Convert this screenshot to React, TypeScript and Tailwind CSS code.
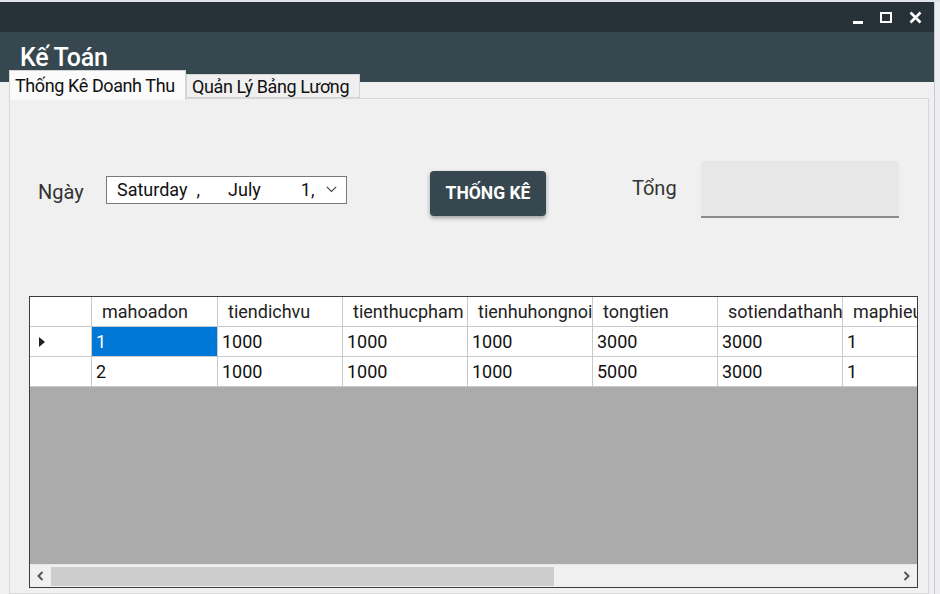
import React from 'react';

const columns = [
  { name: 'mahoadon', w: 'w-[126px]' },
  { name: 'tiendichvu', w: 'w-[125px]' },
  { name: 'tienthucpham', w: 'w-[125px]' },
  { name: 'tienhuhongnoi', w: 'w-[125px]' },
  { name: 'tongtien', w: 'w-[125px]' },
  { name: 'sotiendathanh', w: 'w-[125px]' },
  { name: 'maphieu', w: 'w-[125px]' }
];

const rows = [
  ['1', '1000', '1000', '1000', '3000', '3000', '1'],
  ['2', '1000', '1000', '1000', '5000', '3000', '1']
];

const App: React.FC = () => {
  return (
    <div className="w-[940px] h-[594px] overflow-hidden bg-[#e3e6ee] flex flex-col font-['Roboto','Noto_Sans',sans-serif]">
      <div className="h-[2px] bg-[#dfe3ec] shrink-0" />
      <div className="flex flex-1 min-h-0">
        <div className="w-[934px] flex flex-col bg-[#f0f0f0]">
          {/* title bar */}
          <div className="h-[30px] shrink-0 bg-[#263238] flex items-center justify-end pr-[12px] gap-[17px]">
            <div className="w-[10px] h-[3px] bg-white mt-[10px]" />
            <div className="w-[12px] h-[11px] border-[2.5px] border-white" />
            <svg width="13" height="13" viewBox="0 0 13 13">
              <path d="M1.5 1.5 L11.5 11.5 M11.5 1.5 L1.5 11.5" stroke="white" strokeWidth="2.6" />
            </svg>
          </div>
          {/* header */}
          <div className="h-[50px] shrink-0 bg-[#37474f] pl-[20px] pt-[13px]">
            <span className="text-white text-[25px] font-medium leading-none tracking-[-0.3px]">Kế Toán</span>
          </div>
          {/* tabs */}
          <div className="-mt-[12px] h-[28px] shrink-0 flex items-start pl-[9px] relative z-10">
            <div className="h-[30px] w-[177px] bg-[#fbfbfb] border border-b-0 border-[#d4d4d4] flex items-center pl-[5px] text-[18px] text-[#111] tracking-[-0.4px] whitespace-nowrap">
              Thống Kê Doanh Thu
            </div>
            <div className="mt-[4px] h-[24px] w-[174px] bg-[#f0f0f0] border border-[#d4d4d4] flex items-center pl-[5px] text-[18px] text-[#111] tracking-[-0.4px] whitespace-nowrap">
              Quản Lý Bảng Lương
            </div>
          </div>
          {/* tab page */}
          <div className="flex-1 min-h-0 ml-[9px] mr-[5px] border border-[#d8d8d8] bg-[#f0f0f0] flex flex-col pl-[1px]">
            <div className="flex items-center h-[57px] mt-[62px] shrink-0">
              <div className="ml-[27px] w-[68px] text-[20px] text-[#333] mt-[4px]">Ngày</div>
              <div className="w-[241px] h-[28px] bg-white border border-[#7a7a7a] flex items-center text-[18px] text-[#111] whitespace-nowrap">
                <span className="ml-[10px]">Saturday</span>
                <span className="ml-[9px]">,</span>
                <span className="ml-[28px]">July</span>
                <span className="ml-[40px] w-[18px] overflow-hidden">1, 2023</span>
                <svg className="ml-[7px]" width="11" height="7" viewBox="0 0 11 7">
                  <path d="M0.8 0.8 L5.5 5.5 L10.2 0.8" fill="none" stroke="#444" strokeWidth="1.2" />
                </svg>
              </div>
              <div className="ml-[83px] w-[116px] h-[45px] bg-[#37474f] rounded-[4px] shadow-[0_2px_4px_rgba(0,0,0,0.35)] flex items-center justify-center text-white font-bold text-[17.5px] mt-[8px]">
                THỐNG KÊ
              </div>
              <div className="ml-[86px] w-[69px] text-[20px] text-[#333] -mt-[3px]">Tổng</div>
              <div className="w-[198px] h-[57px] bg-[#e7e7e7] border-b-2 border-[#8a8a8a]" />
            </div>

            {/* grid */}
            <div className="ml-[18px] mt-[78px] w-[889px] h-[292px] border border-[#3c3c3c] bg-[#ababab] flex flex-col overflow-hidden">
              <div className="flex h-[30px] shrink-0 bg-white border-b border-[#c9c9c9]">
                <div className="w-[62px] shrink-0 border-r border-[#c9c9c9]" />
                {columns.map((c, i) => (
                  <div key={i} className={`${c.w} shrink-0 border-r border-[#c9c9c9] flex items-center pl-[10px] text-[18px] text-[#222] whitespace-nowrap overflow-hidden`}>
                    {c.name}
                  </div>
                ))}
              </div>
              {rows.map((r, ri) => (
                <div key={ri} className="flex h-[30px] shrink-0 bg-white border-b border-[#c9c9c9]">
                  <div className="w-[62px] shrink-0 border-r border-[#c9c9c9] flex items-center pl-[9px]">
                    {ri === 0 && (
                      <svg width="6" height="10" viewBox="0 0 6 10">
                        <path d="M0 0 L6 5 L0 10 Z" fill="#222" />
                      </svg>
                    )}
                  </div>
                  {r.map((v, ci) => (
                    <div
                      key={ci}
                      className={`${columns[ci].w} shrink-0 border-r border-[#c9c9c9] flex items-center pl-[4px] text-[18px] ${ri === 0 && ci === 0 ? 'bg-[#0078d7] text-white' : 'text-[#111]'}`}
                    >
                      {v}
                    </div>
                  ))}
                </div>
              ))}
              <div className="flex-1" />
              <div className="h-[23px] shrink-0 bg-[#f0f0f0] border-t border-[#e6e6e6] flex items-center">
                <div className="w-[21px] h-full flex items-center justify-center">
                  <svg width="7" height="10" viewBox="0 0 7 10">
                    <path d="M5.5 1 L1.5 5 L5.5 9" fill="none" stroke="#555" strokeWidth="2" />
                  </svg>
                </div>
                <div className="w-[503px] h-[19px] bg-[#cdcdcd]" />
                <div className="flex-1" />
                <div className="w-[21px] h-full flex items-center justify-center">
                  <svg width="7" height="10" viewBox="0 0 7 10">
                    <path d="M1.5 1 L5.5 5 L1.5 9" fill="none" stroke="#555" strokeWidth="2" />
                  </svg>
                </div>
              </div>
            </div>
          </div>
        </div>
        <div className="flex-1 bg-[#eceef2] border-l border-[#c9ccd4]" />
      </div>
    </div>
  );
};

export default App;
